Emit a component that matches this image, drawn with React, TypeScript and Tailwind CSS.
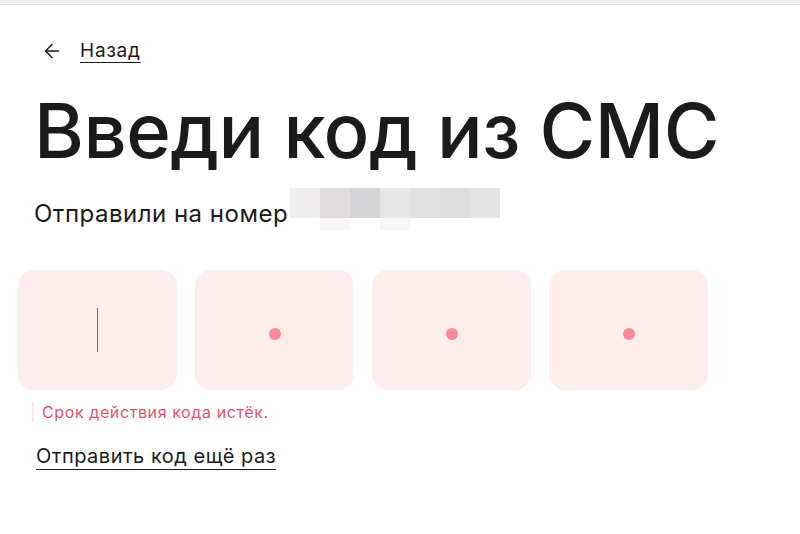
import { ArrowLeft } from 'lucide-react'

const font = { fontFamily: 'Inter, "Noto Sans", sans-serif' }

// pixelated mask over the phone number
const maskTop = ['#efeded', '#e1dcdc', '#d3d5d7', '#e6e6e6', '#e1e1e2', '#dcdcdd', '#e3e3e3']
const maskBottom = ['#ffffff', '#f8f6f6', '#ffffff', '#f7f7f7', '#ffffff', '#ffffff', '#ffffff']

const PhoneMask = () => (
  <div className="flex flex-col ml-[2px] mt-[5px]">
    <div className="flex h-[30px]">
      {maskTop.map((c, i) => (
        <div key={i} className="w-[30px] h-full" style={{ background: c }} />
      ))}
    </div>
    <div className="flex h-[12px]">
      {maskBottom.map((c, i) => (
        <div key={i} className="w-[30px] h-full" style={{ background: c }} />
      ))}
    </div>
  </div>
)

const CodeCell = ({ active }: { active?: boolean }) => (
  <div className="w-[159px] h-[120px] rounded-[16px] bg-[#fdeded] flex items-center justify-center">
    {active ? (
      <div className="w-px h-[44px] bg-[#b0506a]" />
    ) : (
      <div className="mt-[8px] w-[12px] h-[12px] rounded-full bg-[#f78b9b]" />
    )}
  </div>
)

export default function App() {
  return (
    <div className="w-[800px] h-[534px] bg-white overflow-hidden text-[#1b1b1b]" style={font}>
      <div className="h-[5px] bg-[#f1f1f1] border-b border-[#dedede]" />
      <div className="pl-[34px] pt-[33px]">
        <div className="flex items-center gap-[17px] ml-[7px]">
          <ArrowLeft size={22} strokeWidth={1.6} />
          <a className="text-[19px] leading-[26px] tracking-[0.8px] underline underline-offset-[5px] decoration-[1px]">
            Назад
          </a>
        </div>
        <h1 className="mt-[22px] text-[76px] leading-[88px] font-medium tracking-[-0.5px]">Введи код из СМС</h1>
        <div className="mt-[9px] flex items-center">
          <span className="text-[24px] leading-[32px] tracking-[0.5px] mt-[14px]">Отправили на номер</span>
          <PhoneMask />
        </div>
      </div>
      <div className="mt-[40px] pl-[18px] flex gap-[18px]">
        <CodeCell active />
        <CodeCell />
        <CodeCell />
        <CodeCell />
      </div>
      <div className="mt-[12px] ml-[32px] pl-[8px] border-l-2 border-[#fde3e6] text-[16px] leading-[20px] tracking-[0.6px] text-[#e5536b]">
        Срок действия кода истёк.
      </div>
      <a className="block mt-[20px] ml-[36px] text-[20px] leading-[28px] tracking-[0.5px] underline underline-offset-[6px] decoration-[1px]">
        Отправить код ещё раз
      </a>
    </div>
  )
}
